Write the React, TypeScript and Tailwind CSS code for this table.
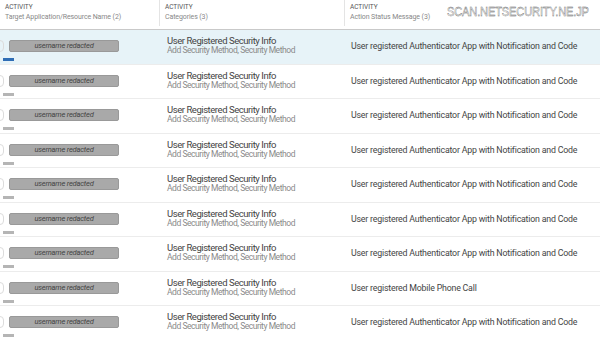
const rows = [
  { msg: 'User registered Authenticator App with Notification and Code', active: true },
  { msg: 'User registered Authenticator App with Notification and Code' },
  { msg: 'User registered Authenticator App with Notification and Code' },
  { msg: 'User registered Authenticator App with Notification and Code' },
  { msg: 'User registered Authenticator App with Notification and Code' },
  { msg: 'User registered Authenticator App with Notification and Code' },
  { msg: 'User registered Authenticator App with Notification and Code' },
  { msg: 'User registered Mobile Phone Call' },
  { msg: 'User registered Authenticator App with Notification and Code' },
];

function HeaderCell({ label, width, last }: { label: string; width: string; last?: boolean }) {
  return (
    <div className={`${width} h-[26px] flex flex-col pl-[5px] pt-[3px] ${last ? '' : 'border-r border-[#e4e4e4]'}`}>
      <span className="text-[6.5px] leading-[8px] text-[#555]">ACTIVITY</span>
      <span className="text-[7px] leading-[10px] mt-[1px] text-[#888] tracking-[-0.1px]">{label}</span>
    </div>
  );
}

export default function App() {
  return (
    <div className="relative w-[600px] h-[337px] overflow-hidden bg-white font-['Roboto','Liberation_Sans',sans-serif]">
      <div className="flex h-[30px] border-b border-[#c9c9c9] bg-white">
        <HeaderCell label="Target Application/Resource Name (2)" width="w-[160px]" />
        <HeaderCell label="Categories (3)" width="w-[185px]" />
        <HeaderCell label="Action Status Message (3)" width="flex-1" last />
      </div>

      {rows.map((row, i) => (
        <div
          key={i}
          className={`flex h-[34.5px] border-b border-[#ececec] ${row.active ? 'bg-[#e7f3f8]' : 'bg-white'}`}
        >
          <div className="relative w-[160px] shrink-0">
            <div className="absolute left-[-4px] top-[10px] w-[8px] h-[12px] rounded-full border border-[#dcdcdc]" />
            <div className="absolute left-[9px] top-[10px] w-[110px] h-[12px] rounded-[2px] bg-[#a9a9a9] border border-[#999] flex items-center justify-center">
              <span className="text-[7.5px] italic text-[#444] leading-none tracking-[-0.2px]">username redacted</span>
            </div>
            <div
              className={`absolute left-[3px] top-[28px] w-[11px] h-[3px] ${row.active ? 'bg-[#2f6db5]' : 'bg-[#b5b5b5]'}`}
            />
          </div>
          <div className="w-[185px] shrink-0 pl-[7px] pt-[6px] flex flex-col">
            <span className="text-[9.5px] leading-[10px] text-[#444] tracking-[-0.45px]">User Registered Security Info</span>
            <span className="text-[8.5px] leading-[9px] text-[#8a8a8a] tracking-[-0.45px]">Add Security Method, Security Method</span>
          </div>
          <div className="flex-1 pl-[6px] flex items-center">
            <span className="text-[8.8px] text-[#444] tracking-[-0.2px]">{row.msg}</span>
          </div>
        </div>
      ))}

      <div className="absolute left-[447px] top-[5px] origin-left scale-x-[0.89] text-[12.5px] leading-[14px] text-white tracking-[-0.2px] [-webkit-text-stroke:0.4px_#666] font-['Liberation_Sans',sans-serif]">
        SCAN.NETSECURITY.NE.JP
      </div>
    </div>
  );
}
